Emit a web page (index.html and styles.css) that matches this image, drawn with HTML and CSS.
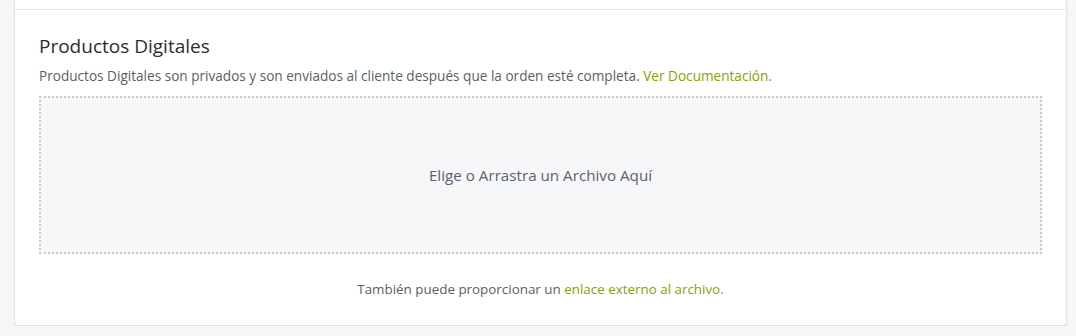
FILE: index.html
```html
<!DOCTYPE html>
<html lang="es">
<head>
<meta charset="utf-8">
<link rel="stylesheet" href="styles.css">
</head>
<body>
<div class="card">
  <div class="prev-section"></div>
  <section class="section">
    <h2 class="title">Productos Digitales</h2>
    <p class="desc">Productos Digitales son privados y son enviados al cliente después que la orden esté completa. <a class="link" href="#">Ver Documentación.</a></p>
    <div class="dropzone">Elige o Arrastra un Archivo Aquí</div>
    <p class="alt">También puede proporcionar un <a class="link" href="#">enlace externo al archivo.</a></p>
  </section>
</div>
</body>
</html>
```

FILE: styles.css
```css
html, body {
  margin: 0;
  padding: 0;
  background: #f6f7f9;
  font-family: "Open Sans", Lato, sans-serif;
}
.card {
  margin: 0 9px 0 14px;
  background: #fff;
  border: 1px solid #e1e3e6;
  border-top: none;
  border-radius: 0 0 4px 4px;
  box-shadow: 0 1px 2px rgba(0, 0, 0, 0.08);
}
.prev-section {
  height: 9px;
  border-bottom: 1px solid #e6e8eb;
}
.section {
  padding: 24px 24px 26px 24px;
}
.title {
  margin: 0;
  font-size: 19px;
  line-height: 24px;
  font-weight: 400;
  color: #2a2d31;
}
.desc {
  margin: 8px 0 0 0;
  font-size: 13.6px;
  line-height: 20px;
  color: #585f68;
}
.link {
  color: #80a603;
  text-decoration: none;
}
.dropzone {
  margin-top: 10px;
  height: 154px;
  border: 2px dotted #c6c8cb;
  background: #f6f7f9;
  display: flex;
  align-items: center;
  justify-content: center;
  font-size: 15.2px;
  color: #5b626c;
}
.alt {
  margin: 25px 0 0 0;
  text-align: center;
  font-size: 13.4px;
  line-height: 20px;
  color: #585f68;
}
```
